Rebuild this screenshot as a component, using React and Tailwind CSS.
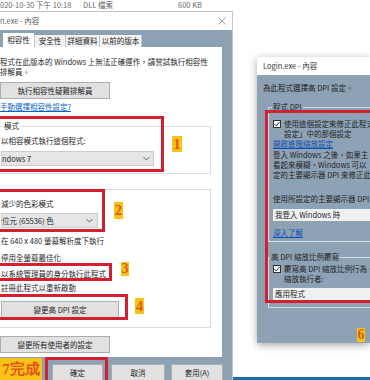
import React from 'react';

const RED = 'absolute border-[3px] border-[#d31f2f] pointer-events-none';

function Num({ children, className }) {
  return (
    <div className={`absolute flex items-center justify-center bg-[#f7c416] text-[#e4531b] font-['Liberation_Serif',serif] font-bold leading-none ${className}`}>
      {children}
    </div>
  );
}

function Chevron() {
  return (
    <svg width="7" height="5" viewBox="0 0 7 5" className="shrink-0">
      <polyline points="0.5,1 3.5,4 6.5,1" fill="none" stroke="#555" strokeWidth="0.9" />
    </svg>
  );
}

function Check() {
  return (
    <div className="w-[8px] h-[8px] mt-[1px] shrink-0 bg-white border border-[#333] flex items-center justify-center">
      <svg width="6" height="6" viewBox="0 0 6 6">
        <polyline points="0.6,3.2 2.3,4.9 5.4,1" fill="none" stroke="#222" strokeWidth="1" />
      </svg>
    </div>
  );
}

function WinButton({ children, className }) {
  return (
    <div className={`h-[17px] bg-[#e1e1e1] border border-[#adadad] flex items-center justify-center shrink-0 ${className}`}>
      {children}
    </div>
  );
}

export default function App() {
  return (
    <div className="relative w-[370px] h-[380px] overflow-hidden bg-white text-[7.5px] leading-[10px] text-[#1f1f1f] font-['Noto_Sans_CJK_TC','Noto_Sans',sans-serif]">
      {/* explorer row behind */}
      <div className="flex h-[11px] text-[#6b6b6b] whitespace-nowrap">
        <span className="w-[83px]">020-10-30 下午 10:18</span>
        <span className="w-[95px]">DLL 檔案</span>
        <span>600 KB</span>
      </div>

      {/* left dialog */}
      <div className="absolute left-0 top-[11px] bottom-0 w-[233px] flex flex-col bg-white border-t border-r border-[#c4c4c4]">
        <div className="h-[18px] shrink-0 flex items-center justify-between pr-[6px]">
          <span className="text-[#5a5a5a]">n.exe - 內容</span>
          <svg width="8" height="8" viewBox="0 0 8 8">
            <path d="M0.5 0.5 L7.5 7.5 M7.5 0.5 L0.5 7.5" stroke="#8a8a8a" strokeWidth="0.8" />
          </svg>
        </div>
        <div className="flex-1 flex flex-col bg-[#8da1b4] pr-[10px]">
          <div className="h-[17px] shrink-0 flex items-end pl-[3px] whitespace-nowrap">
            <div className="h-[14px] w-[31px] bg-white flex items-center justify-center">相容性</div>
            <div className="h-[12px] w-[31px] bg-[#f3f3f3] border-l border-[#b9c4ce] flex items-center justify-center">安全性</div>
            <div className="h-[12px] w-[34px] bg-[#f3f3f3] border-l border-[#b9c4ce] flex items-center justify-center">詳細資料</div>
            <div className="h-[12px] w-[43px] bg-[#f3f3f3] border-l border-r border-[#b9c4ce] flex items-center justify-center">以前的版本</div>
          </div>

          <div className="h-[310px] shrink-0 bg-white flex flex-col pt-[10px] whitespace-nowrap">
            <div>程式在此版本的 Windows 上無法正確運作，請嘗試執行相容性</div>
            <div>排解員。</div>
            <WinButton className="mt-[5px] w-[110px] h-[16px]">執行相容性疑難排解員</WinButton>
            <div className="mt-[3px] text-[#0a64c8] underline">手動選擇相容性設定?</div>

            <div className="relative mt-[14px] -ml-[4px] w-[215px] border border-[#dcdcdc] pl-[4px] pt-[9px] pb-[7px]">
              <span className="absolute -top-[6px] left-[6px] bg-white px-[1px]">模式</span>
              <div>以相容模式執行這個程式:</div>
              <div className="mt-[5px] w-[153px] h-[15px] bg-[#e5e5e5] border border-[#cccccc] flex items-center justify-between pr-[3px]">
                <span>ndows 7</span>
                <Chevron />
              </div>
            </div>

            <div className="relative mt-[15px] -ml-[4px] w-[215px] border border-[#dcdcdc] pl-[4px] pt-[9px] pb-[9px]">
              <div>減少的色彩模式</div>
              <div className="mt-[4px] w-[97px] h-[15px] bg-[#e5e5e5] border border-[#cccccc] flex items-center justify-between pr-[4px]">
                <span>位元 (65536) 色</span>
                <Chevron />
              </div>
              <div className="mt-[8px]">在 640 x 480 螢幕解析度下執行</div>
              <div className="mt-[7px]">停用全螢幕最佳化</div>
              <div className="mt-[6px]">以系統管理員的身分執行此程式</div>
              <div className="mt-[4px]">註冊此程式以重新啟動</div>
              <WinButton className="mt-[8px] w-[118px] h-[15px]">變更高 DPI 設定</WinButton>
            </div>

            <WinButton className="mt-[8px] w-[110px] h-[15px]">變更所有使用者的設定</WinButton>
          </div>

          <div className="flex pt-[7px]">
            <WinButton className="ml-[52px] w-[51px] border-[#0078d7]">確定</WinButton>
            <WinButton className="ml-[8px] w-[54px]">取消</WinButton>
            <WinButton className="ml-[6px] w-[52px]">套用(A)</WinButton>
          </div>
        </div>
      </div>

      {/* right dialog */}
      <div className="absolute left-[257px] top-[57px] w-[113px] h-[286px] flex flex-col shadow-[0_2px_8px_rgba(0,0,0,0.35)] whitespace-nowrap overflow-hidden">
        <div className="h-[18px] shrink-0 bg-white flex items-center pl-[6px] text-[#333]">Login.exe - 內容</div>
        <div className="flex-1 bg-[#8ea2b5] pl-[6px] pt-[8px] flex flex-col">
          <div>為此程式選擇高 DPI 設定。</div>

          <div className="relative mt-[14px] ml-[5px] h-[135px] border-t border-l border-b border-[#d3dbe3] pl-[4px] pt-[11px]">
            <span className="absolute -top-[6px] left-[3px] bg-[#8ea2b5] px-[1px]">程式 DPI</span>
            <div className="flex gap-[3px]">
              <Check />
              <div>
                <div>使用這個設定來修正此程式</div>
                <div>設定」中的那個設定</div>
              </div>
            </div>
            <div className="text-[#0a50b4] underline">開啟進階縮放設定</div>
            <div className="mt-[1px]">登入 Windows 之後，如果主</div>
            <div>看起來模糊，Windows 可以</div>
            <div>定的主要顯示器 DPI 來修正此</div>
            <div className="mt-[14px]">使用所設定的主要顯示器 DPI</div>
            <div className="mt-[5px] h-[12px] bg-[#eef0f2] flex items-center pl-[2px]">我登入 Windows 時</div>
            <div className="mt-[7px] text-[#0a50b4] underline">深入了解</div>
          </div>

          <div className="relative mt-[15px] ml-[5px] h-[51px] border-t border-l border-b border-[#d3dbe3] pl-[4px] pt-[6px]">
            <span className="absolute -top-[6px] left-[1px] bg-[#8ea2b5] px-[1px]">高 DPI 縮放比例覆寫</span>
            <div className="flex gap-[3px]">
              <Check />
              <div>
                <div>覆寫高 DPI 縮放比例行為。</div>
                <div>縮放執行者:</div>
              </div>
            </div>
            <div className="mt-[4px] h-[12px] bg-[#eef0f2] flex items-center pl-[2px]">應用程式</div>
          </div>
        </div>
      </div>

      {/* taskbar strip */}
      <div className="absolute left-[233px] right-0 bottom-0 h-[3px] bg-[#1c6db0]" />

      {/* annotations */}
      <div className={`${RED} -left-[3px] top-[116px] w-[167px] h-[56px]`} />
      <Num className="left-[172px] top-[136px] w-[10px] h-[16px] text-[15px]">1</Num>
      <div className={`${RED} -left-[3px] top-[189px] w-[108px] h-[43px]`} />
      <Num className="left-[114px] top-[202px] w-[9px] h-[17px] text-[15px]">2</Num>
      <div className={`${RED} -left-[3px] top-[263px] w-[115px] h-[18px]`} />
      <Num className="left-[121px] top-[262px] w-[8px] h-[14px] text-[14px]">3</Num>
      <div className={`${RED} -left-[3px] top-[294px] w-[131px] h-[26px]`} />
      <Num className="left-[135px] top-[298px] w-[9px] h-[16px] text-[15px]">4</Num>
      <div className={`${RED} left-[45px] top-[357px] w-[63px] h-[30px]`} />
      <Num className="left-0 top-[358px] w-[42px] h-[22px] text-[15px]">7完成</Num>
      <div className={`${RED} left-[265px] top-[110px] w-[120px] h-[193px]`} />
      <Num className="left-[357px] top-[328px] w-[8px] h-[14px] text-[14px]">6</Num>
    </div>
  );
}
